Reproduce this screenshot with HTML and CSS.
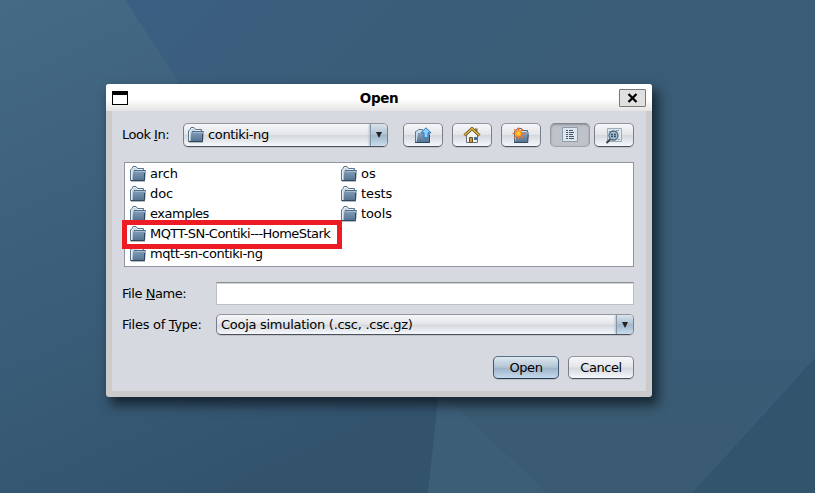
FILE: index.html
```html
<!DOCTYPE html>
<html lang="en">
<head>
<meta charset="utf-8">
<title>Open</title>
<link rel="stylesheet" href="styles.css">
</head>
<body>
<svg class="wallpaper" viewBox="0 0 815 493" aria-hidden="true">
  <defs>
    <linearGradient id="base" gradientUnits="userSpaceOnUse" x1="130" y1="0" x2="430" y2="300"><stop offset="0" stop-color="#3b5f82"/><stop offset=".5" stop-color="#3a5d79"/><stop offset="1" stop-color="#3a5c76"/></linearGradient>
    <linearGradient id="left" gradientUnits="userSpaceOnUse" x1="0" y1="0" x2="220" y2="493"><stop offset="0" stop-color="#456a86"/><stop offset=".5" stop-color="#3b5f7b"/><stop offset="1" stop-color="#33536d"/></linearGradient>
    <linearGradient id="lower" gradientUnits="userSpaceOnUse" x1="0" y1="350" x2="0" y2="450"><stop offset="0" stop-color="#3a5c76"/><stop offset="1" stop-color="#3a5b72"/></linearGradient>
  </defs>
  <path fill="url(#base)" d="M0 0h815v493H0z"/>
  <path fill="url(#left)" d="M0 0h125l236 360 79 30-12 103H0z"/>
  <path fill="url(#lower)" d="M439 390l213-40h163L692 493H547z"/>
  <path fill="#3d5e77" d="M439 390l108 103H428z"/>
  <path fill="#33546d" d="M815 358v135H692z"/>
</svg>
<svg class="symbols" aria-hidden="true">
  <defs>
    <linearGradient id="blue" x1="0" y1="0" x2="0" y2="1"><stop offset="0" stop-color="#87a1bb"/><stop offset="1" stop-color="#557390"/></linearGradient>
  </defs>
  <symbol id="folder" viewBox="0 0 16 16">
    <path d="M1 15.500h14" stroke="#b4bac2"/>
    <path fill="#c6d6e3" stroke="#5b7489" d="M.5 14.500V4L2 2.500 3 .5h3l1.500 2H13.500V5"/>
    <path fill="none" stroke="#e6eff6" d="M1.500 13V4.500L3 3.500 3.500 1.500h2l1.500 2h5.500"/>
    <path fill="url(#blue)" d="M4 4h12l-1 10.500H2.500L3 7z"/>
    <path fill="none" stroke="#4f6b86" d="M4 4.500h11.500"/>
    <path fill="none" stroke="#a5bbcf" d="M5 5.500h10"/>
    <path fill="none" stroke="#304860" d="M.5 14.500h14V7"/>
  </symbol>
</svg>
<main class="desktop">
  <section class="dialog">
    <header class="titlebar">
      <span class="window-icon"></span>
      <h1 class="title">Open</h1>
      <button class="close" aria-label="Close"><svg width="11" height="10" viewBox="0 0 11 10"><path d="M1.500 1l8 8M9.500 1l-8 8" stroke="#000" stroke-width="2.300"/></svg></button>
    </header>
    <div class="content">
      <div class="toolbar">
        <label class="look-label"><span class="t-look">Look <u>I</u>n:</span></label>
        <div class="combo look-combo">
          <svg class="folder"><use href="#folder"/></svg>
          <span class="combo-text t-contiki">contiki-ng</span>
          <span class="combo-arrow"><i></i></span>
        </div>
        <div class="tools">
          <button class="btn tool" aria-label="Up"><svg width="18" height="17" viewBox="0 0 18 17"><path d="M1.500 15.500v-11l2-1 1-1h4l1 2h5v2" fill="#cbdbe8" stroke="#5b7891"/><path d="M4 6h12v9.500H2.500z" fill="url(#blue)"/><path d="M1 15.500h14.500V8" fill="none" stroke="#304860"/><path d="M12 .8l5 5h-3v5h-4v-5H7z" fill="#8ed0ff" stroke="#2676bb"/></svg></button>
          <button class="btn tool" aria-label="Home"><svg width="18" height="17" viewBox="0 0 18 17"><path d="M3.500 8v7.500h11V8L9 2.500z" fill="#f1f2f4" stroke="#6b717c"/><path d="M12 1.500h2.500v4H12z" fill="#8b7048"/><path d="M1.500 8.500L9 1.500l7.500 7" fill="none" stroke="#665017" stroke-width="3"/><path d="M1.500 8.500L9 1.500l7.500 7" fill="none" stroke="#e5bd4a" stroke-width="1.300"/><path d="M6.500 10.500h3v5h-3z" fill="#c79c45" stroke="#70501c"/><path d="M11 10h3v3h-3z" fill="#416f9f"/></svg></button>
          <button class="btn tool" aria-label="New folder"><svg width="18" height="17" viewBox="0 0 18 17"><path d="M2.500 15.500v-11l2-1 1-2h4l1 2h5v3" fill="#cbdbe8" stroke="#4e687f"/><path d="M5 5h12l-1.500 10.500H3z" fill="url(#blue)"/><path d="M2 15.500h13.700l.5-8" fill="none" stroke="#304860"/><path d="M6.500 .5v12M.5 6.500h12M2.300 2.300l8.500 8.500M10.800 2.300l-8.500 8.500" stroke="#f8702a" stroke-width="1.600"/><circle cx="6.500" cy="6.500" r="2.900" fill="#ffa51c"/><circle cx="6.500" cy="6.500" r="1.800" fill="#ffd032"/></svg></button>
          <button class="btn tool pressed" aria-label="List"><svg width="16" height="16" viewBox="0 0 16 16"><path d="M.5.500h15v14H.500z" fill="#dbe6f0" stroke="#8c9caa"/><path d="M4 3.500h2m1 0h4M4 5.500h2m1 0h5M4 7.500h2m1 0h4M4 9.500h2m1 0h5M4 11.500h2m1 0h5" stroke="#4b5560"/></svg></button>
          <button class="btn tool details" aria-label="Details"><svg width="18" height="17" viewBox="0 0 18 17"><path d="M2.500 1.500h14v13h-14z" fill="#dce6ef" stroke="#9cacba"/><path d="M11 3.500h3M4 4.500h3M13 12.500h2" stroke="#8c9caa"/><path d="M5.500 12L1.500 16" stroke="#354350" stroke-width="2"/><circle cx="8.500" cy="8.500" r="4.500" fill="#a5bed1" stroke="#53677a" stroke-width="1.300"/><path d="M6 7.500h2m1 0h2M6 9.500h2m1 0h2" stroke="#36526b" stroke-width="1.300"/></svg></button>
        </div>
      </div>
      <div class="files">
        <ul class="column">
          <li><svg class="folder"><use href="#folder"/></svg><span class="t-arch">arch</span></li>
          <li><svg class="folder"><use href="#folder"/></svg><span class="t-arch">doc</span></li>
          <li><svg class="folder"><use href="#folder"/></svg><span class="t-examples">examples</span></li>
          <li><svg class="folder"><use href="#folder"/></svg><span class="t-stark">MQTT-SN-Contiki---HomeStark</span></li>
          <li><svg class="folder"><use href="#folder"/></svg><span class="t-mqtt">mqtt-sn-contiki-ng</span></li>
        </ul>
        <ul class="column">
          <li><svg class="folder"><use href="#folder"/></svg><span>os</span></li>
          <li><svg class="folder"><use href="#folder"/></svg><span class="t-arch">tests</span></li>
          <li><svg class="folder"><use href="#folder"/></svg><span class="t-arch">tools</span></li>
        </ul>
        <div class="highlight"></div>
      </div>
      <div class="form">
        <label><span class="t-name">File <u>N</u>ame:</span></label>
        <div class="field"></div>
        <label><span class="t-type">Files of <u>T</u>ype:</span></label>
        <div class="combo type-combo">
          <span class="combo-text t-cooja">Cooja simulation (.csc, .csc.gz)</span>
          <span class="combo-arrow"><i></i></span>
        </div>
      </div>
      <footer class="actions">
        <button class="btn default"><span class="t-open">Open</span></button>
        <button class="btn"><span class="t-cancel">Cancel</span></button>
      </footer>
    </div>
  </section>
</main>
</body>
</html>
```
FILE: styles.css
```css
* { box-sizing: border-box; }
body { margin: 0; overflow: hidden; background: #3a5d78; font: 13px/16px "DejaVu Sans", sans-serif; color: #000; }
button { font: inherit; color: inherit; padding: 0; margin: 0; }
svg { display: block; flex: none; }
.wallpaper { position: absolute; inset: 0; width: 815px; height: 493px; }
.symbols { position: absolute; width: 0; height: 0; }
.desktop { position: relative; width: 815px; height: 493px; padding: 84px 0 0 106px; }
.dialog { width: 546px; height: 313px; padding: 0 6px 6px; background: #cbcbcb; border-radius: 3px; box-shadow: 5px 7px 12px 1px rgba(12, 22, 30, .75); }
.titlebar { display: flex; align-items: center; justify-content: space-between; height: 27px; margin: 0 -6px; padding: 0 6px; border-radius: 3px 3px 0 0; background: linear-gradient(#fff 55%, #e4e4e4); }
.window-icon { width: 16px; height: 14px; margin-right: 11px; border: 1px solid #000; border-top-width: 4px; background: #fff; }
.title { margin: 0; font-size: 13.5px; line-height: 18px; font-weight: bold; letter-spacing: -.4px; }
.close { display: flex; align-items: center; justify-content: center; width: 27px; height: 18px; margin-top: 1px; border: 1px solid #777; border-radius: 1px; background: #e0e0e0; }
.content { height: 280px; padding: 12px 12px 0 10px; background: #d6d9e0; }
.toolbar { display: flex; align-items: center; height: 24px; }
.look-label { width: 61px; }
.t-look { letter-spacing: -.5px; }
.t-contiki { letter-spacing: -.35px; }
.t-arch { letter-spacing: -.1px; }
.t-examples { letter-spacing: -.48px; }
.t-stark { letter-spacing: -.55px; }
.t-mqtt { letter-spacing: -.41px; }
.t-name { letter-spacing: -.45px; }
.t-type { letter-spacing: -.28px; }
.t-cooja { letter-spacing: -.28px; }
.t-open { letter-spacing: -.4px; }
.t-cancel { letter-spacing: -.45px; }
.combo, .btn { border: 1px solid #7a7e88; border-top-color: #94969d; border-bottom-color: #4c505a; border-radius: 5px; background: linear-gradient(#f6f7f9, #e3e5e9 48%, #d4d8dc 52%, #f5f7fb); box-shadow: 0 1px 0 #bfc2c9; }
.combo { display: flex; align-items: center; overflow: hidden; }
.combo-arrow { display: flex; align-items: center; justify-content: center; width: 17px; height: 100%; margin: 0 0 0 auto; border-left: 1px solid #8296aa; background: linear-gradient(#d9e3ec, #afc1d1 48%, #a0b6ca 52%, #c9ddef); box-shadow: -1px 0 2px #b5bcc5; }
.combo-arrow i { border: 3.500px solid transparent; border-top: 6px solid #222; border-bottom: 0; }
.look-combo { width: 205px; height: 24px; padding-left: 4px; }
.folder { width: 16px; height: 16px; margin-right: 4px; }
.tools { display: flex; gap: 9px; margin-left: 15px; }
.btn { display: flex; align-items: center; justify-content: center; width: 66px; height: 23px; }
.btn.tool { width: 40px; height: 24px; }
.details { margin-left: -5px; }
.btn.pressed { border-color: #85888f #969aa2 #a2a5ac; background: #bfc2c9; box-shadow: inset 0 1px 2px #8e9299; }
.files { position: relative; display: flex; height: 105px; margin: 15px 0 0 2px; padding: 1px 5px; border: 1px solid #92959e; background: #fff; }
.column { width: 211px; margin: 0; padding: 0; list-style: none; }
.column li { display: flex; align-items: center; height: 20px; white-space: nowrap; }
.column .folder { margin-top: -1px; }
.highlight { position: absolute; left: -3px; top: 57px; width: 220px; height: 29px; border: 5px solid #ed1c24; }
.form { display: grid; grid-template-columns: 94px 418px; grid-template-rows: 23px 21px; row-gap: 9px; align-items: center; margin-top: 15px; }
.field { height: 23px; border: 1px solid #bcbec1; border-top: 1px solid #8b8d91; background: #fff; box-shadow: inset 0 1px 0 #d4d4d6; }
.type-combo { height: 21px; padding-left: 4px; }
.actions { display: flex; justify-content: flex-end; gap: 9px; margin-top: 21px; }
.btn.default { border-color: #567087 #405870 #253d54; background: linear-gradient(#dfe8f0, #b3c5d5 48%, #9fb5c9 55%, #c6daee); }
```
